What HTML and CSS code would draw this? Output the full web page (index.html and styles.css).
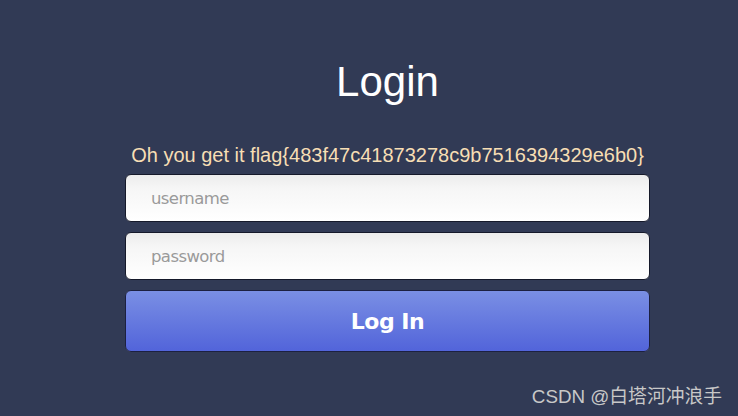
FILE: index.html
```html
<!DOCTYPE html>
<html>

<head>
    <title>Login</title>
    <link rel="stylesheet" href="styles.css">
</head>

<body>
    <main class="login">
        <h1>Login</h1>
        <p class="msg">Oh you get it flag{483f47c41873278c9b7516394329e6b0}</p>
        <form class="login-form">
            <input type="text" placeholder="username" />
            <input type="password" placeholder="password" />
            <button type="button" class="submit">Log In</button>
        </form>
    </main>
    <div class="mark">CSDN @白塔河冲浪手</div>
</body>

</html>
```

FILE: styles.css
```css
* {
    margin: 0;
    box-sizing: border-box;
}

html,
body {
    height: 100%;
}

body {
    background-color: #313a55;
    font-family: "Liberation Sans", Arial, sans-serif;
    position: relative;
    overflow: hidden;
}

.login {
    width: 525px;
    margin-left: 125px;
    padding-top: 57px;
}

h1 {
    color: white;
    font-weight: normal;
    font-size: 42px;
    text-align: center;
    line-height: 50px;
}

.msg {
    color: #f7deb4;
    font-size: 20px;
    text-align: center;
    margin-top: 36px;
    line-height: 24px;
    white-space: nowrap;
}

.login-form {
    display: flex;
    flex-direction: column;
    gap: 10px;
    margin-top: 7px;
}

input {
    height: 48px;
    border: 1px solid #15192a;
    border-radius: 6px;
    background-image: linear-gradient(#ececec, #f6f6f6 30%, #ffffff);
    padding: 0 25px;
    font-family: "DejaVu Sans", sans-serif;
    font-size: 16.5px;
    letter-spacing: -0.6px;
}

input::placeholder {
    color: #9a9a9a;
}

.submit {
    height: 62px;
    border: 1px solid #1c2040;
    border-radius: 6px;
    background-image: linear-gradient(#7a8fe4, #5264da);
    color: white;
    font-family: "DejaVu Sans", sans-serif;
    font-weight: bold;
    font-size: 22px;
    letter-spacing: -0.5px;
}

.mark {
    position: absolute;
    right: 16px;
    bottom: 8px;
    color: #c8c8c8;
    font-size: 18.8px;
    font-family: "Liberation Sans", "Noto Sans CJK SC", sans-serif;
}
```
